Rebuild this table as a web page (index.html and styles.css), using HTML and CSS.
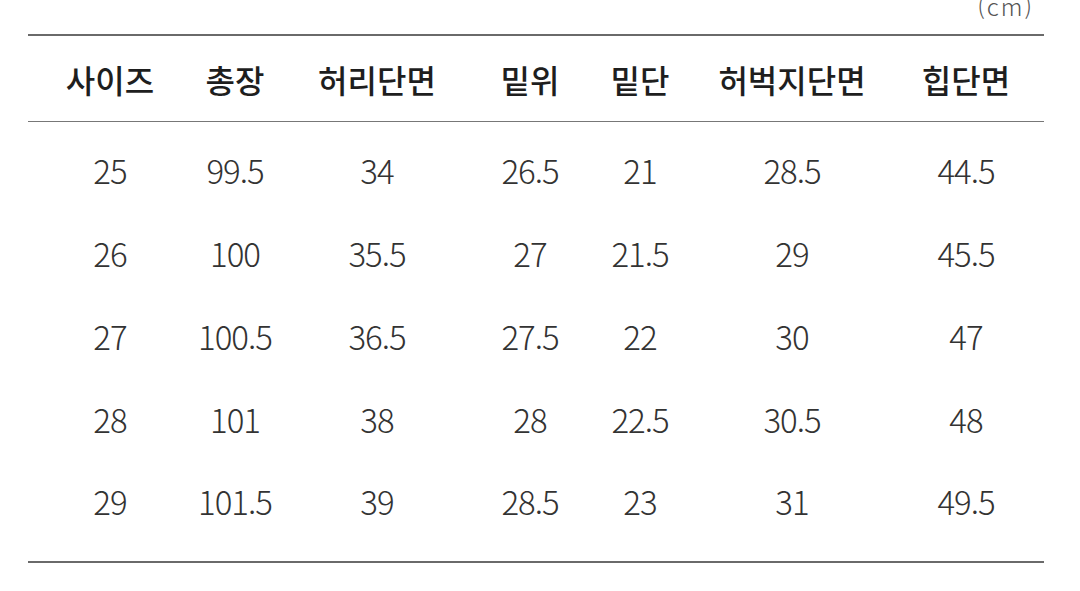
FILE: index.html
```html
<!DOCTYPE html>
<html lang="ko">
<head>
<meta charset="utf-8">
<link rel="stylesheet" href="styles.css">
</head>
<body>
<div class="wrap">
  <div class="unit"><span>(cm)</span></div>
  <div class="table">
    <div class="row head">
      <div>사이즈</div><div>총장</div><div>허리단면</div><div>밑위</div><div>밑단</div><div>허벅지단면</div><div>힙단면</div>
    </div>
    <div class="body">
      <div class="row"><div>25</div><div>99.5</div><div>34</div><div>26.5</div><div>21</div><div>28.5</div><div>44.5</div></div>
      <div class="row"><div>26</div><div>100</div><div>35.5</div><div>27</div><div>21.5</div><div>29</div><div>45.5</div></div>
      <div class="row"><div>27</div><div>100.5</div><div>36.5</div><div>27.5</div><div>22</div><div>30</div><div>47</div></div>
      <div class="row"><div>28</div><div>101</div><div>38</div><div>28</div><div>22.5</div><div>30.5</div><div>48</div></div>
      <div class="row"><div>29</div><div>101.5</div><div>39</div><div>28.5</div><div>23</div><div>31</div><div>49.5</div></div>
    </div>
  </div>
</div>
</body>
</html>
```

FILE: styles.css
```css
html, body {
  margin: 0;
  padding: 0;
  background: #fff;
}
body {
  font-family: "Noto Sans CJK KR", "Noto Sans", sans-serif;
  color: #222;
}
.wrap {
  width: 1016px;
  padding-left: 28px;
}
.unit {
  height: 34px;
  display: flex;
  justify-content: flex-end;
  margin-right: 10px;
  overflow: hidden;
}
.unit span {
  font-family: "Noto Sans CJK KR", "Noto Sans", sans-serif;
  font-size: 24px;
  font-weight: 300;
  line-height: 24px;
  margin-top: -6px;
  letter-spacing: 2px;
  color: #555;
}
.table {
  border-top: 2px solid #6a6a6a;
  border-bottom: 2px solid #6a6a6a;
}
.row {
  display: grid;
  grid-template-columns: 164px 86px 198px 108px 112px 192px 156px;
  align-items: center;
  text-align: center;
}
.head {
  height: 85px;
  border-bottom: 1.5px solid #777;
  font-size: 32px;
  font-weight: 500;
  color: #1e1e1e;
}
.body {
  padding-top: 7px;
  padding-bottom: 18px;
}
.body .row {
  height: 82.75px;
  font-size: 33px;
  font-weight: 300;
  color: #333;
  letter-spacing: -1px;
}
```
